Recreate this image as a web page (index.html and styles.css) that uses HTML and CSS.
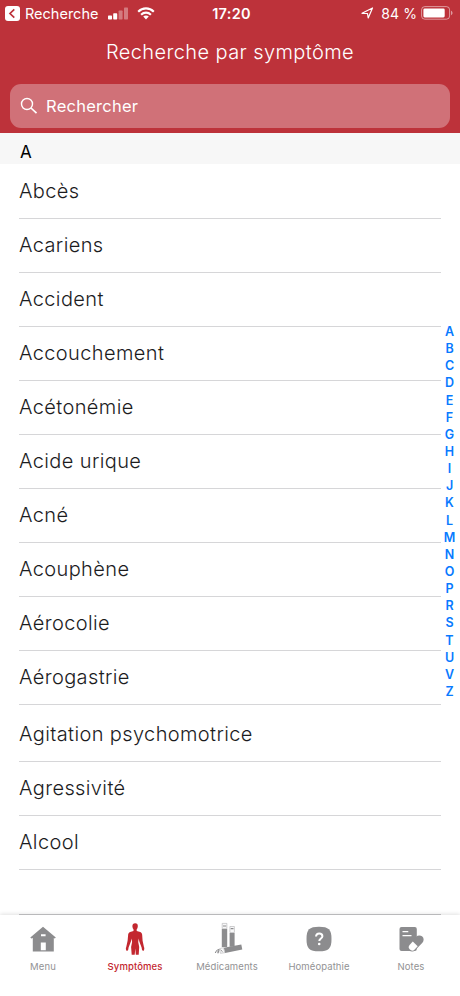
FILE: index.html
```
<!DOCTYPE html>
<html lang="fr">
<head>
<meta charset="utf-8">
<title>Recherche par symptôme</title>
<link rel="stylesheet" href="styles.css">
</head>
<body>
<div class="app">
  <header class="header">
    <div class="status">
      <div class="status-left">
        <svg class="back" width="15" height="15" viewBox="0 0 15 15"><rect width="15" height="15" rx="3" fill="#fff"/><path d="M9.3 3.3 5 7.5l4.3 4.2" fill="none" stroke="#bd323a" stroke-width="1.7"/></svg>
        <span class="back-label">Recherche</span>
        <svg class="signal" width="21" height="13" viewBox="0 0 21 13" fill="#fff"><rect y="8.5" width="4" height="4" rx=".7"/><rect x="5.2" y="6.2" width="4" height="6.3" rx=".7"/><g opacity=".35"><rect x="10.6" y="3.5" width="4" height="9" rx=".7"/><rect x="16" y=".5" width="4" height="12" rx=".7"/></g></svg>
        <svg class="wifi" width="18" height="13" viewBox="0 0 18 13"><g fill="none" stroke="#fff" stroke-width="2.1"><path d="M1.2 4.7C5.5.3 12.5.3 16.8 4.7"/><path d="M4.1 7.7c2.8-2.8 7-2.8 9.800 0"/></g><path d="M6.2 9.6c1.6-1.4 4-1.4 5.6 0L9 12.500z" fill="#fff"/></svg>
      </div>
      <div class="time">17:20</div>
      <div class="status-right">
        <svg class="arrow" width="13" height="12" viewBox="0 0 13 12"><path d="M1 6.3 11.500 1 7.200 11 6.500 6.500z" fill="none" stroke="#fff" stroke-width="1.2" stroke-linejoin="round"/></svg>
        <span class="percent">84 %</span>
        <svg class="battery" width="33" height="14" viewBox="0 0 33 14"><rect x=".6" y=".6" width="28" height="12.6" rx="3.2" fill="none" stroke="#fff" stroke-opacity=".5" stroke-width="1"/><rect x="2.4" y="2.4" width="21.3" height="9" rx="1.3" fill="#fff"/><path d="M30 4.8c2 .7 2 3.7 0 4.400z" fill="#fff" fill-opacity=".5"/></svg>
      </div>
    </div>
    <h1 class="title">Recherche par symptôme</h1>
    <div class="search">
      <svg width="18" height="18" viewBox="0 0 18 18" fill="none" stroke="#fff" stroke-width="1.4"><circle cx="7" cy="7" r="5.5"/><path d="m11 11 5.5 5.2" stroke-width="1.7"/></svg>
      <span>Rechercher</span>
    </div>
  </header>
  <main class="content">
    <h2 class="section">A</h2>
    <ul class="list">
      <li>Abcès</li><li>Acariens</li><li>Accident</li><li>Accouchement</li><li>Acétonémie</li><li>Acide urique</li><li>Acné</li><li>Acouphène</li><li>Aérocolie</li><li>Aérogastrie</li><li class="tall">Agitation psychomotrice</li><li>Agressivité</li><li>Alcool</li>
    </ul>
    <nav class="index"><span>A</span><span>B</span><span>C</span><span>D</span><span>E</span><span>F</span><span>G</span><span>H</span><span>I</span><span>J</span><span>K</span><span>L</span><span>M</span><span>N</span><span>O</span><span>P</span><span>R</span><span>S</span><span>T</span><span>U</span><span>V</span><span>Z</span></nav>
  </main>
  <footer class="tabs">
    <div class="tab">
      <svg width="34" height="34" viewBox="0 0 34 34" fill="#8c8c8e"><path fill-rule="evenodd" d="M17 4.8 29.8 15.5l-1 1-1-.6v13.6H6.8V15.9l-1.5.7-1-1.1zM14.8 20.4v7.8h5v-7.8zM15 12.2v2h4.6v-2z"/></svg>
      <span>Menu</span>
    </div>
    <div class="tab active">
      <svg width="34" height="34" viewBox="0 0 34 34" fill="#c3272f"><path d="M17.2 1.3c1.8 0 2.8 1.2 2.6 3.1-.1 1.3-.5 2.2-1.1 2.8v1.700l3.500 1.100c1.300.5 1.900 1.600 2 3.200l.4 5.500 1.400 6.500c.5.7.3 1.900-.1 3.400-.8.6-1.600.1-1.900-.9l-.4-2.200-2.300-6-.6-3.100-.5 3.700 1 4.800-.5 7.900h-2.900l-.5-6.400-.6 6.400h-3l-.6-7.900 1-4.800-.5-3.700-.7 3.100-2.300 6-.4 2.200c-.3 1-1.200 1.500-1.900.9-.5-1.500-.6-2.700-.1-3.400l1.400-6.500.5-5.500c.1-1.600.7-2.700 2-3.200l3.400-1.100V7.200c-.6-.6-1-1.500-1.100-2.800-.1-1.900 1-3.100 2.800-3.100z"/></svg>
      <span>Symptômes</span>
    </div>
    <div class="tab">
      <svg width="34" height="34" viewBox="0 0 34 34"><g fill="#8c8c8e"><path d="M11.800 7h5.400v18.100h-5.400zM19.600 11h5v12.800l-5 .8zM13.700 25.700l17.600-3.200 1 5-17.200 3.600z"/></g><g fill="#f8f8f9" stroke="#b0b0b2" stroke-width=".6"><path d="M12.200 1.400h4.700v5.300h-4.700zM19.900 4.500h4.500v6h-4.500z"/><path d="m9.400 26.700 4.100-1.100 1.400 5.100-4.500.6z"/></g><g fill="#8c8c8e"><path d="M13 3.500h3.200v1H13zM20.700 6h2.800v1.300h-2.800z"/></g><path d="m5.200 31 1.500-2.600 2.300-1-1 4M6.800 30h1.700M10.500 27.800l2 1.800" fill="none" stroke="#8c8c8e"/></svg>
      <span>Médicaments</span>
    </div>
    <div class="tab">
      <svg width="34" height="34" viewBox="0 0 34 34"><path d="M17 4.700c9.700 0 12.500 2.800 12.500 12.300S26.700 29.300 17 29.300 4.500 26.500 4.500 17 7.300 4.700 17 4.700z" fill="#8c8c8e"/><path d="M14 14.500c.2-2 1.300-2.900 3.200-2.900 2 0 3.200 1 3.200 2.600 0 2.300-3.100 2.200-3.100 4.800" fill="none" stroke="#fff" stroke-width="2"/><circle cx="17.200" cy="22" r="1.300" fill="#fff"/></svg>
      <span>Homéopathie</span>
    </div>
    <div class="tab">
      <svg width="34" height="34" viewBox="0 0 34 34"><rect x="5.500" y="4.900" width="17.300" height="24.200" rx="2" fill="#8c8c8e"/><path d="M8.500 9.600h5.800M8.500 13.600h9" stroke="#fff" stroke-width="1.300"/><g transform="rotate(-46 21.500 21.500)"><rect x="12.200" y="17.300" width="19" height="8.600" rx="4.300" fill="#8c8c8e"/><path d="M21 18.200h-4.300a3.400 3.400 0 0 0 0 6.800H21z" fill="#fff"/></g></svg>
      <span>Notes</span>
    </div>
  </footer>
</div>
</body>
</html>
```
FILE: styles.css
```
* { box-sizing: border-box; }
body { margin: 0; background: #fff; font-family: Inter, "Liberation Sans", sans-serif; }
svg { display: block; flex: none; }
.app { width: 460px; height: 996px; display: flex; flex-direction: column; overflow: hidden; }
.header { height: 133px; flex: none; background: #bd323a; color: #fff; }
.status { height: 26px; display: grid; grid-template-columns: 1fr auto 1fr; align-items: center; padding: 0 6px 0 5px; }
.status-left, .status-right { display: flex; align-items: center; }
.status-right { justify-content: flex-end; }
.back-label { font-size: 14.5px; letter-spacing: 0; margin-left: 5px; width: 73px; white-space: nowrap; }
.signal { margin-left: 10px; }
.wifi { margin-left: 8px; }
.time { font-size: 14.5px; font-weight: 600; letter-spacing: .3px; position: relative; left: 2px; }
.percent { font-size: 14px; letter-spacing: .1px; margin: 0 4px 0 7px; white-space: nowrap; }
.title { margin: 0; height: 58px; line-height: 52px; text-align: center; font-size: 20px; font-weight: 300; letter-spacing: .4px; }
.search { margin: 0 10px; height: 44px; border-radius: 11px; background: #d07178; display: flex; align-items: center; padding: 0 0 1px 10px; gap: 8px; font-size: 16.5px; letter-spacing: .25px; }
.content { flex: 1; min-height: 0; position: relative; }
.section { margin: 0; height: 31px; padding: 4px 0 0 20px; line-height: 31px; font-size: 17px; font-weight: 400; background: #f7f7f7; color: #000; }
.list { list-style: none; margin: 0 19px; padding: 0; height: 751px; border-bottom: 1px solid #c8c8ca; }
.list li { height: 54px; line-height: 52px; border-bottom: 1px solid #d6d6d8; font-size: 20px; font-weight: 300; color: #1c1c1e; letter-spacing: .38px; }
.list .tall { height: 57px; line-height: 58px; }
.list li:first-child { height: 55px; line-height: 54px; }
.index { position: absolute; right: 3px; top: 190px; width: 15px; display: grid; grid-auto-rows: 17.150px; color: #087aff; font-size: 12.500px; font-weight: 600; text-align: center; line-height: 17px; }
.tabs { flex: none; height: 81px; display: grid; grid-template-columns: repeat(5, 92px); justify-content: center; padding-right: 6px; padding-top: 7px; background: #fff; box-shadow: 0 -1px 4px rgba(0,0,0,.12); position: relative; }
.tab { display: flex; flex-direction: column; align-items: center; gap: 4px; color: #929294; font-size: 9.500px; line-height: 14px; letter-spacing: .1px; }
.active { color: #c3272f; font-weight: 500; }
```
